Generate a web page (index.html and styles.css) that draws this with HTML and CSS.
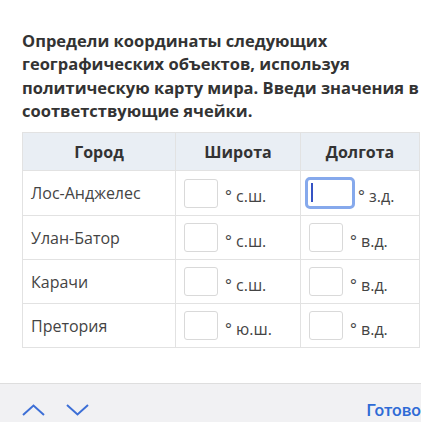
FILE: index.html
```
<!DOCTYPE html>
<html>
<head>
<meta charset="utf-8">
<title>Координаты</title>
<link rel="stylesheet" href="styles.css">
</head>
<body>
  <div class="page">
    <p class="task">Определи координаты следующих географических объектов, используя политическую карту мира. Введи значения в соответствующие ячейки.</p>

    <table class="coords">
      <tr>
        <th class="c-city">Город</th>
        <th class="c-lat">Широта</th>
        <th class="c-lon">Долгота</th>
      </tr>
      <tr class="first">
        <td>Лос-Анджелес</td>
        <td><div class="cell"><span class="box"></span><span class="unit">° с.ш.</span></div></td>
        <td><div class="cell tight"><span class="box focus"><i class="caret"></i></span><span class="unit">° з.д.</span></div></td>
      </tr>
      <tr>
        <td>Улан-Батор</td>
        <td><div class="cell"><span class="box"></span><span class="unit">° с.ш.</span></div></td>
        <td><div class="cell"><span class="box"></span><span class="unit">° в.д.</span></div></td>
      </tr>
      <tr>
        <td>Карачи</td>
        <td><div class="cell"><span class="box"></span><span class="unit">° с.ш.</span></div></td>
        <td><div class="cell"><span class="box"></span><span class="unit">° в.д.</span></div></td>
      </tr>
      <tr>
        <td>Претория</td>
        <td><div class="cell"><span class="box"></span><span class="unit">° ю.ш.</span></div></td>
        <td><div class="cell"><span class="box"></span><span class="unit">° в.д.</span></div></td>
      </tr>
    </table>
  </div>

  <footer class="bar">
    <div class="arrows">
      <svg width="23" height="12" viewBox="0 0 23 12"><path d="M1 11 L11.5 1.5 L22 11" fill="none" stroke="#3d6fd6" stroke-width="2"/></svg>
      <svg width="23" height="12" viewBox="0 0 23 12"><path d="M1 1 L11.5 10.5 L22 1" fill="none" stroke="#3d6fd6" stroke-width="2"/></svg>
    </div>
    <span class="done">Готово</span>
  </footer>
</body>
</html>
```
FILE: styles.css
```
body {
  margin: 0;
  height: 422px;
  display: flex;
  flex-direction: column;
  overflow: hidden;
  background: #fff;
  font-family: "Open Sans", "Liberation Sans", sans-serif;
}
.page {
  flex: 1;
  padding: 29px 0 0 22px;
  width: 420px;
  overflow: hidden;
}
.task {
  margin: 0 0 10px;
  font-size: 16.5px;
  font-weight: 700;
  line-height: 23.3px;
  color: #333;
  width: 399px;
}

.coords {
  border-collapse: collapse;
  width: 398px;
  table-layout: fixed;
  font-size: 16px;
  color: #444;
}
.coords th,
.coords td {
  border: 1px solid #e2e2e2;
  padding: 0;
}
.coords th {
  height: 37px;
  background: #e9eef4;
  font-weight: 700;
  color: #333;
  text-align: center;
}
.c-city { width: 152px; }
.c-lat { width: 124px; }
.coords td {
  height: 43px;
}
.coords tr.first td { height: 44px; }
.coords td:first-child {
  padding-left: 8px;
}

.cell {
  display: flex;
  align-items: center;
  padding-left: 8px;
}
.cell.tight { padding-left: 4px; }
.box {
  display: block;
  width: 32px;
  height: 27px;
  border: 1px solid #d9d9d9;
  border-radius: 3px;
  background: #fff;
}
.box.focus {
  position: relative;
  width: 44px;
  height: 26px;
  border: 3px solid #86a9ec;
  border-radius: 5px;
}
.caret {
  position: absolute;
  left: 3px;
  top: 3px;
  width: 2px;
  height: 19px;
  background: #3553c4;
}
.unit {
  padding: 6px 0 0 7px;
  font-size: 16px;
  color: #444;
}
.tight .unit { padding-left: 3px; }

.bar {
  height: 39px;
  box-sizing: border-box;
  border-top: 1px solid #dedede;
  background: #f1f1f3;
  display: flex;
  align-items: center;
  justify-content: space-between;
  padding: 14px 0 0 22px;
}
.arrows {
  display: flex;
  gap: 21px;
}
.done {
  color: #2f6bd6;
  font-size: 17px;
  font-family: Roboto, "Open Sans", sans-serif;
  font-weight: 500;
}
```
